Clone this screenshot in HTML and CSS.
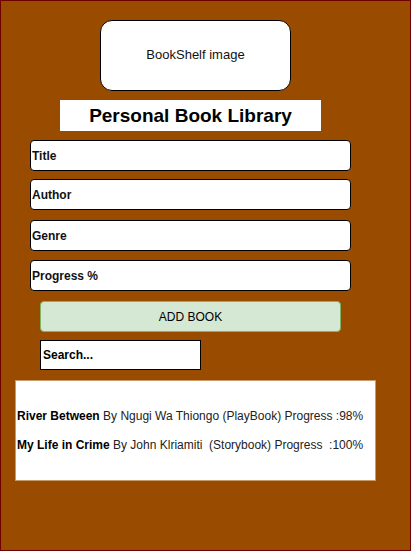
FILE: index.html
```html
<!DOCTYPE html>
<html>
<head>
<meta charset="utf-8">
<link rel="stylesheet" href="styles.css">
</head>
<body>
<div class="frame">
  <div class="image-box">BookShelf image</div>
  <div class="banner">Personal Book Library</div>
  <div class="field f-title">Title</div>
  <div class="field f-author">Author</div>
  <div class="field f-genre">Genre</div>
  <div class="field f-progress">Progress %</div>
  <div class="add-btn">ADD BOOK</div>
  <div class="search">Search...</div>
  <div class="list">
    <div class="item"><b>River Between</b> By Ngugi Wa Thiongo (PlayBook) Progress :98%</div>
    <div class="item"><b>My Life in Crime</b> By John Klriamiti&nbsp; (Storybook) Progress&nbsp; :100%</div>
  </div>
</div>
</body>
</html>
```
FILE: styles.css
```css
* { box-sizing: border-box; }
html, body { margin: 0; padding: 0; }
body {
  font-family: "Liberation Sans", Arial, sans-serif;
  font-size: 12px;
  color: #000;
}
.frame {
  width: 411px;
  height: 551px;
  background: #994c00;
  border: 1px solid #6f0000;
  display: flex;
  flex-direction: column;
  align-items: flex-start;
  padding-top: 19px;
}
.image-box {
  margin-left: 99px;
  width: 191px;
  height: 71px;
  background: #fff;
  border: 1px solid #000;
  border-radius: 12px;
  display: flex;
  align-items: center;
  justify-content: center;
  padding-bottom: 2px;
  font-size: 13px;
  color: #111;
}
.banner {
  margin-top: 9px;
  margin-left: 59px;
  width: 261px;
  height: 31px;
  background: #fff;
  display: flex;
  align-items: center;
  justify-content: center;
  font-size: 19px;
  font-weight: bold;
}
.field {
  margin-left: 29px;
  width: 321px;
  height: 31px;
  background: #fff;
  border: 1px solid #000;
  border-radius: 4px;
  display: flex;
  align-items: center;
  padding-left: 1px;
  font-weight: bold;
  color: #111;
}
.f-title { margin-top: 9px; }
.f-author { margin-top: 8px; }
.f-genre { margin-top: 10px; }
.f-progress { margin-top: 9px; }
.add-btn {
  margin-top: 10px;
  margin-left: 39px;
  width: 301px;
  height: 31px;
  background: #d5e8d4;
  border: 1px solid #82b366;
  border-radius: 4px;
  display: flex;
  align-items: center;
  justify-content: center;
}
.search {
  margin-top: 8px;
  margin-left: 39px;
  width: 161px;
  height: 30px;
  background: #fff;
  border: 1px solid #000;
  display: flex;
  align-items: center;
  padding-left: 2px;
  font-weight: bold;
}
.list {
  margin-top: 10px;
  margin-left: 14px;
  width: 361px;
  height: 101px;
  background: #fff;
  border: 1px solid #c99a6a;
  display: flex;
  flex-direction: column;
  justify-content: center;
  gap: 15px;
  padding-left: 1px;
}
.item {
  line-height: 14px;
  color: #222;
  white-space: nowrap;
}
.item b { color: #000; }
```
